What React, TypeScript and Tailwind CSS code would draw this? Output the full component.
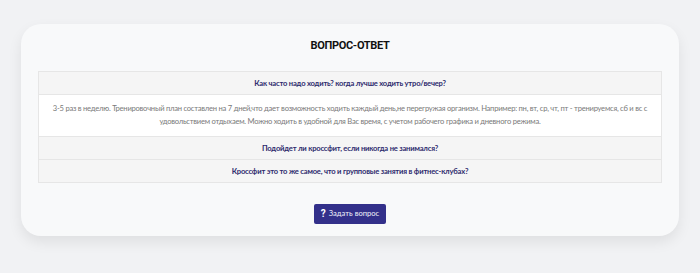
import { useState } from 'react';

const faq = [
  {
    q: 'Как часто надо ходить? когда лучше ходить утро/вечер?',
    a: '3-5 раз в неделю. Тренировочный план составлен на 7 дней,что дает возможность ходить каждый день,не перегружая организм. Например: пн, вт, ср, чт, пт - тренируемся, сб и вс с удовольствием отдыхаем. Можно ходить в удобной для Вас время, с учетом рабочего графика и дневного режима.',
  },
  { q: 'Подойдет ли кроссфит, если никогда не занимался?', a: '' },
  { q: 'Кроссфит это то же самое, что и групповые занятия в фитнес-клубах?', a: '' },
];

export default function App() {
  const [open, setOpen] = useState(0);

  return (
    <div className="min-h-[273px] bg-[#f1f2f4] px-[21px] pt-[24px] pb-[37px] font-['Lato',sans-serif]">
      <div className="rounded-[20px] bg-[#f8f9fa] px-[17px] pt-[14px] pb-[12px] shadow-[0_6px_14px_rgba(0,0,0,0.08)]">
        <h2 className="text-center font-['Roboto',sans-serif] text-[11px] leading-[16px] font-bold tracking-[-0.3px] text-[#111]">
          ВОПРОС-ОТВЕТ
        </h2>

        <div className="mt-[17px] border border-[#e6e6e6] bg-[#f5f5f5]">
          {faq.map((item, i) => (
            <div key={i} className={i > 0 ? 'border-t border-[#e6e6e6]' : ''}>
              <button
                onClick={() => setOpen(open === i ? -1 : i)}
                className="block h-[22px] w-full text-center text-[7.6px] leading-[22px] font-bold tracking-[-0.2px] text-[#2e2b6e]"
              >
                {item.q}
              </button>
              {open === i && item.a && (
                <div className="border-t border-[#e6e6e6] bg-white px-[10px] pt-[7px] pb-[8px] text-center text-[7.6px] leading-[13px] tracking-[-0.24px] text-[#7a7a7a]">
                  {item.a}
                </div>
              )}
            </div>
          ))}
        </div>

        <div className="mt-[21px] flex justify-center">
          <button className="flex h-[20px] items-center gap-[3px] rounded-[2px] bg-[#33308a] px-[7px] text-[7.6px] text-[#f0f0fa]">
            <span className="font-['Roboto',sans-serif] text-[10px] leading-none font-bold text-white">?</span>
            Задать вопрос
          </button>
        </div>
      </div>
    </div>
  );
}
